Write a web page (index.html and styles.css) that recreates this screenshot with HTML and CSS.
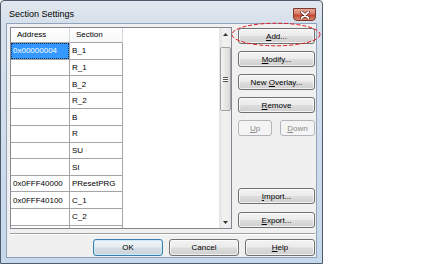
FILE: index.html
```html
<!DOCTYPE html>
<html>
<head>
<meta charset="utf-8">
<title>Section Settings</title>
<link rel="stylesheet" href="styles.css">
</head>
<body>
<div class="window">
  <div class="titlebar">
    <span class="title">Section Settings</span>
    <div class="close">
      <svg width="10" height="8" viewBox="0 0 10 8"><path d="M1.5 1 L8.5 7 M8.5 1 L1.5 7" stroke="#5a1a14" stroke-width="3" stroke-linecap="round"/><path d="M1.5 1 L8.5 7 M8.5 1 L1.5 7" stroke="#fff" stroke-width="1.8" stroke-linecap="round"/></svg>
    </div>
  </div>
  <div class="client">
    <div class="main">
      <div class="list">
        <div class="grid">
          <div class="hdr"><div class="hc c1">Address</div><div class="hc c2">Section</div></div>
          <div class="row"><div class="cell c1 sel"><span class="focus">0x00000004</span></div><div class="cell c2">B_1</div></div>
          <div class="row"><div class="cell c1"></div><div class="cell c2">R_1</div></div>
          <div class="row"><div class="cell c1"></div><div class="cell c2">B_2</div></div>
          <div class="row"><div class="cell c1"></div><div class="cell c2">R_2</div></div>
          <div class="row"><div class="cell c1"></div><div class="cell c2">B</div></div>
          <div class="row"><div class="cell c1"></div><div class="cell c2">R</div></div>
          <div class="row"><div class="cell c1"></div><div class="cell c2">SU</div></div>
          <div class="row"><div class="cell c1"></div><div class="cell c2">SI</div></div>
          <div class="row"><div class="cell c1">0x0FFF40000</div><div class="cell c2">PResetPRG</div></div>
          <div class="row"><div class="cell c1">0x0FFF40100</div><div class="cell c2">C_1</div></div>
          <div class="row"><div class="cell c1"></div><div class="cell c2">C_2</div></div>
          <div class="row"><div class="cell c1"></div><div class="cell c2"></div></div>
        </div>
        <div class="vscroll">
          <div class="arrow"><svg width="5" height="3" viewBox="0 0 5 3"><path d="M0 3 L2.5 0 L5 3Z" fill="#333"/></svg></div>
          <div class="track">
            <div class="thumb"><div class="grip"></div></div>
          </div>
          <div class="arrow"><svg width="5" height="3" viewBox="0 0 5 3"><path d="M0 0 L2.5 3 L5 0Z" fill="#333"/></svg></div>
        </div>
      </div>
      <div class="side">
        <button class="btn add"><span><u>A</u>dd...</span></button>
        <button class="btn mt7"><span><u>M</u>odify...</span></button>
        <button class="btn mt7"><span>New <u>O</u>verlay...</span></button>
        <button class="btn mt7"><span><u>R</u>emove</span></button>
        <div class="updown">
          <button class="btn dis up"><span><u>U</u>p</span></button>
          <button class="btn dis down"><span><u>D</u>own</span></button>
        </div>
        <button class="btn import"><span><u>I</u>mport...</span></button>
        <button class="btn export"><span><u>E</u>xport...</span></button>
      </div>
    </div>
    <div class="sep"></div>
    <div class="bottom">
      <button class="btn wide def"><span>OK</span></button>
      <button class="btn wide"><span>Cancel</span></button>
      <button class="btn wide"><span><u>H</u>elp</span></button>
    </div>
  </div>
  <svg class="ring" width="90" height="25" viewBox="0 0 90 25"><ellipse cx="45" cy="12.5" rx="44" ry="11.3" fill="none" stroke="#e0161b" stroke-width="1" stroke-dasharray="4 2"/></svg>
</div>
</body>
</html>
```
FILE: styles.css
```css
* { box-sizing: border-box; }
html, body { margin: 0; background: #fff; }
body {
  font-family: "Liberation Sans", Arial, sans-serif;
  font-size: 8px;
  color: #000;
}
.window {
  position: relative;
  width: 323px;
  height: 264px;
  border: 1px solid #4e5b6a;
  border-radius: 4px 4px 0 0;
  background: linear-gradient(#e1e7ee 0, #d6e0eb 22px, #c6d8ec 100%);
  display: flex;
  flex-direction: column;
}
.titlebar {
  height: 22px;
  flex: none;
  display: flex;
  align-items: flex-start;
}
.title {
  font-size: 9px;
  line-height: 11px;
  margin: 8px 0 0 8px;
}
.close {
  margin: 7px 6px 0 auto;
  width: 23px;
  height: 13px;
  border: 1px solid #7a3a30;
  border-radius: 0 0 4px 4px;
  background: linear-gradient(#e8a898, #d47a66 45%, #c2432f 55%, #d68a70);
  display: flex;
  align-items: center;
  justify-content: center;
}
.client {
  flex: 1;
  margin: 0 5px 5px;
  border: 1px solid #8fa3ba;
  background: #f0f0f0;
  padding: 3px 1px 1px 3px;
  display: flex;
  flex-direction: column;
}
.main {
  height: 202px;
  flex: none;
  display: flex;
  gap: 6px;
}
.list {
  width: 222px;
  border: 1px solid #828790;
  background: #fff;
  display: flex;
}
.grid {
  flex: 1;
  overflow: hidden;
}
.hdr {
  display: flex;
  height: 15px;
}
.hc {
  height: 15px;
  border-right: 1px solid #d6d9dc;
  border-bottom: 1px solid #a5a5a5;
  background: linear-gradient(#ffffff, #f6f7f8);
  padding-left: 6px;
  line-height: 14px;
}
.c1 { width: 59px; }
.c2 { width: 53px; }
.row {
  display: flex;
  height: 16.62px;
}
.cell {
  height: 100%;
  border-right: 1px solid #a5a5a5;
  border-bottom: 1px solid #a5a5a5;
  padding-left: 2px;
  display: flex;
  align-items: center;
  white-space: nowrap;
  overflow: hidden;
}
.cell.sel {
  padding: 0;
  background: #fff;
}
.focus {
  display: flex;
  align-items: center;
  width: 100%;
  height: 100%;
  padding-left: 2px;
  background: #3399ff;
  color: #fff;
  outline: 1px dotted #102a50;
  outline-offset: -1px;
}
.vscroll {
  width: 12px;
  display: flex;
  flex-direction: column;
  background: linear-gradient(90deg, #e3e3e3, #f1f1f1 40%, #ececec);
}
.arrow {
  height: 12px;
  flex: none;
  display: flex;
  align-items: center;
  justify-content: center;
}
.track {
  flex: 1;
  padding: 7px 0 0 1px;
}
.thumb {
  height: 64px;
  border: 1px solid #a2a2a2;
  border-radius: 2px;
  background: linear-gradient(90deg, #f3f3f3, #e6e6e6 50%, #d9d9d9);
  display: flex;
  align-items: center;
  justify-content: center;
}
.grip {
  width: 5px;
  height: 5px;
  border-top: 1px solid #555;
  border-bottom: 1px solid #555;
  background: linear-gradient(#fff 0, #fff 1px, #555 1px, #555 2px, #fff 2px);
  background-size: 100% 3px;
  background-position: 0 0;
}
.side {
  width: 77px;
  display: flex;
  flex-direction: column;
}
.btn {
  height: 16px;
  width: 100%;
  flex: none;
  margin: 0;
  padding: 0;
  font: 8px "Liberation Sans", Arial, sans-serif;
  color: #000;
  border: 1px solid #707070;
  border-radius: 3px;
  background: linear-gradient(#f3f3f3 0, #ebebeb 48%, #dddddd 52%, #cfcfcf 100%);
  box-shadow: inset 0 0 0 1px rgba(255,255,255,0.7);
  display: flex;
  align-items: center;
  justify-content: center;
}
.btn u { text-decoration-thickness: 1px; text-underline-offset: 1px; }
.add { margin-top: 1px; }
.mt7 { margin-top: 7px; }
.updown {
  display: flex;
  justify-content: space-between;
  margin-top: 7px;
}
.up { width: 34px; }
.down { width: 35px; }
.btn.dis {
  border-color: #b3b6b9;
  background: #f4f4f4;
  color: #8a8a8a;
  box-shadow: none;
}
.import { margin-top: auto; }
.export { margin-top: 8px; margin-bottom: 1px; }
.sep {
  height: 2px;
  flex: none;
  margin-top: 4px;
  border-top: 1px solid #a0a0a0;
  border-bottom: 1px solid #ffffff;
}
.bottom {
  display: flex;
  justify-content: flex-end;
  gap: 6px;
  margin-top: 4px;
}
.btn.wide {
  width: 70px;
  height: 17px;
}
.btn.def {
  border-color: #3c7fb1;
  box-shadow: inset 0 0 0 1px #c9e8f8;
  background: linear-gradient(#f0f4f7 0, #e6ecf0 48%, #d6dee4 52%, #c9d3da 100%);
}
.ring {
  position: absolute;
  left: 230px;
  top: 21px;
}
```
